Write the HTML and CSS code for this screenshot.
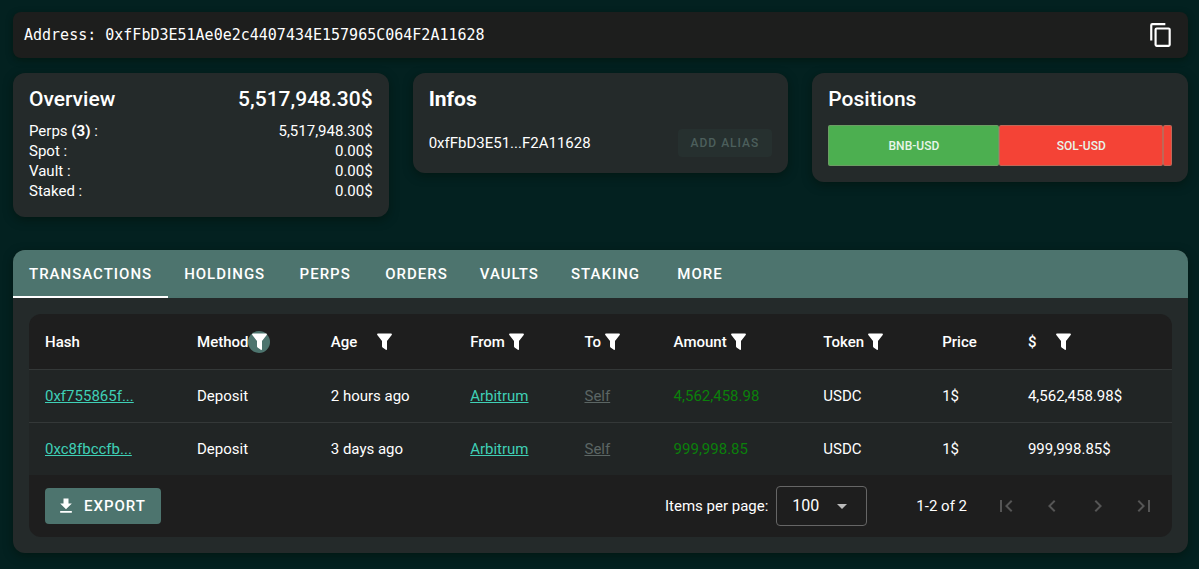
FILE: index.html
```html
<!DOCTYPE html>
<html lang="en">
<head>
    <meta charset="UTF-8">
    <meta name="viewport" content="width=device-width, initial-scale=1">
    <title>Address</title>
    <link rel="stylesheet" href="styles.css">
</head>
<body>
<svg class="defs" aria-hidden="true">
    <symbol id="filter" viewBox="0 0 15 17"><path d="M1 0.5h13c.9 0 1.2.8.7 1.5L10 8v8c0 .9-.6 1.1-1.2.7L5.6 14.400c-.4-.3-.6-.6-.6-1.100V8L.3 2C-.2 1.300.1.5 1 .5z"/></symbol>
</svg>

<header class="address">
    <span>Address: 0xfFbD3E51Ae0e2c4407434E157965C064F2A11628</span>
    <button class="icon-btn" aria-label="Copy address">
        <svg width="26" height="26" viewBox="0 0 24 24"><path d="M19 21H8V7h11m0-2H8a2 2 0 0 0-2 2v14a2 2 0 0 0 2 2h11a2 2 0 0 0 2-2V7a2 2 0 0 0-2-2m-3-4H4a2 2 0 0 0-2 2v14h2V3h12V1z"/></svg>
    </button>
</header>

<main>
    <div class="cards">
        <section class="card overview">
            <div class="line title"><h2>Overview</h2><span>5,517,948.30$</span></div>
            <div class="line"><span>Perps <b>(3)</b> :</span><span>5,517,948.30$</span></div>
            <div class="line"><span>Spot :</span><span>0.00$</span></div>
            <div class="line"><span>Vault :</span><span>0.00$</span></div>
            <div class="line"><span>Staked :</span><span>0.00$</span></div>
        </section>
        <section class="card infos">
            <h2>Infos</h2>
            <div class="line"><span>0xfFbD3E51...F2A11628</span><button class="alias" disabled>ADD ALIAS</button></div>
        </section>
        <section class="card positions">
            <h2>Positions</h2>
            <div class="bar">
                <div class="long" style="width: 49.8%">BNB-USD</div>
                <div class="short" style="width: 47.600%">SOL-USD</div>
                <div class="short" style="width: 2.600%"></div>
            </div>
        </section>
    </div>

    <section class="panel">
        <nav class="tabs">
            <button class="tab active">TRANSACTIONS</button>
            <button class="tab">HOLDINGS</button>
            <button class="tab">PERPS</button>
            <button class="tab">ORDERS</button>
            <button class="tab">VAULTS</button>
            <button class="tab">STAKING</button>
            <button class="tab">MORE</button>
        </nav>
        <div class="sheet">
            <table>
                <colgroup>
                    <col class="c-hash"><col class="c-method"><col class="c-age"><col class="c-from"><col class="c-to"><col class="c-amount"><col class="c-token"><col class="c-price"><col class="c-total">
                </colgroup>
                <thead>
                    <tr>
                        <th><div class="th">Hash</div></th>
                        <th><div class="th tight">Method<button class="filter on" aria-label="Filter method"><svg><use href="#filter"/></svg></button></div></th>
                        <th><div class="th wide">Age<button class="filter" aria-label="Filter age"><svg><use href="#filter"/></svg></button></div></th>
                        <th><div class="th">From<button class="filter" aria-label="Filter from"><svg><use href="#filter"/></svg></button></div></th>
                        <th><div class="th">To<button class="filter" aria-label="Filter to"><svg><use href="#filter"/></svg></button></div></th>
                        <th><div class="th">Amount<button class="filter" aria-label="Filter amount"><svg><use href="#filter"/></svg></button></div></th>
                        <th><div class="th">Token<button class="filter" aria-label="Filter token"><svg><use href="#filter"/></svg></button></div></th>
                        <th><div class="th">Price</div></th>
                        <th><div class="th wide">$<button class="filter" aria-label="Filter value"><svg><use href="#filter"/></svg></button></div></th>
                    </tr>
                </thead>
                <tbody>
                    <tr>
                        <td><a href="#">0xf755865f...</a></td>
                        <td>Deposit</td>
                        <td>2 hours ago</td>
                        <td><a href="#">Arbitrum</a></td>
                        <td><a href="#" class="self">Self</a></td>
                        <td class="in">4,562,458.98</td>
                        <td>USDC</td>
                        <td>1$</td>
                        <td>4,562,458.98$</td>
                    </tr>
                    <tr>
                        <td><a href="#">0xc8fbccfb...</a></td>
                        <td>Deposit</td>
                        <td>3 days ago</td>
                        <td><a href="#">Arbitrum</a></td>
                        <td><a href="#" class="self">Self</a></td>
                        <td class="in">999,998.85</td>
                        <td>USDC</td>
                        <td>1$</td>
                        <td>999,998.85$</td>
                    </tr>
                </tbody>
            </table>
            <footer class="footer">
                <button class="export">
                    <svg width="20" height="20" viewBox="0 0 24 24"><path d="M5 20h14v-2H5m14-9h-4V3H9v6H5l7 7z"/></svg>
                    EXPORT
                </button>
                <label for="per-page">Items per page:</label>
                <div class="select">
                    <select id="per-page"><option>100</option></select>
                    <svg width="24" height="24" viewBox="0 0 24 24"><path d="M7 10l5 5 5-5z"/></svg>
                </div>
                <span class="range">1-2 of 2</span>
                <div class="pager">
                    <button disabled aria-label="First page"><svg width="24" height="24" viewBox="0 0 24 24"><path d="M18.410 16.590L13.820 12l4.590-4.590L17 6l-6 6 6 6zM6 6h2v12H6z"/></svg></button>
                    <button disabled aria-label="Previous page"><svg width="24" height="24" viewBox="0 0 24 24"><path d="M15.410 16.580L10.830 12l4.580-4.590L14 6l-6 6 6 6z"/></svg></button>
                    <button disabled aria-label="Next page"><svg width="24" height="24" viewBox="0 0 24 24"><path d="M8.590 16.580L13.170 12 8.590 7.410 10 6l6 6-6 6z"/></svg></button>
                    <button disabled aria-label="Last page"><svg width="24" height="24" viewBox="0 0 24 24"><path d="M5.590 7.410L10.180 12l-4.590 4.590L7 18l6-6-6-6zM16 6h2v12h-2z"/></svg></button>
                </div>
            </footer>
        </div>
    </section>
</main>
</body>
</html>
```
FILE: styles.css
```css
* { box-sizing: border-box; }
body { margin: 0; padding: 12px 11px 16px 13px; background-color: #032120; color: #fff; font: 15px/20px Roboto, sans-serif; }
button, select { font: inherit; color: inherit; background: none; border: 0; padding: 0; }
h2 { margin: 0; font-size: 21px; line-height: 20px; font-weight: 500; }
svg { fill: currentColor; display: block; }
.defs { display: none; }

.address { display: flex; align-items: center; justify-content: space-between; height: 46px; padding: 0 14px 0 11px; border-radius: 8px; background: #1d1e1d; font-family: "DejaVu Sans Mono", monospace; box-shadow: 0 2px 6px rgba(0, 20, 10, .6); }

.cards { display: grid; grid-template-columns: repeat(3, 1fr); gap: 24px; align-items: start; margin: 15px 0 33px; }
.card { padding: 16px; border-radius: 12px; background: #242a2a; box-shadow: 0 3px 10px rgba(0, 16, 8, .5); }
.line { display: flex; align-items: center; justify-content: space-between; }
.title { margin-bottom: 12px; font-size: 21px; font-weight: 500; }
.infos h2 { margin-bottom: 20px; font-weight: 700; }
.alias { height: 28px; padding: 0 13px; border-radius: 4px; background: #26302f; color: #4c5f5c; font-size: 12px; font-weight: 500; letter-spacing: 1px; }
.positions h2 { margin-bottom: 16px; }
.bar { display: flex; height: 41px; font-size: 12px; font-weight: 500; }
.bar div { display: flex; align-items: center; justify-content: center; border-radius: 2px; border: 1px solid rgba(140, 140, 120, .5); color: #e8f5e9; }
.long { background: #4caf50; }
.short { background: #f44336; }

.panel { border-radius: 12px; background: #242a2a; overflow: hidden; box-shadow: 0 3px 10px rgba(0, 16, 8, .5); }
.tabs { display: flex; background: #4d746e; }
.tab { height: 48px; min-width: 88px; padding: 0 16px; font-size: 15px; font-weight: 500; letter-spacing: 1px; }
.active { box-shadow: inset 0 -2px #fff; }
.sheet { margin: 16px; border-radius: 12px; background: #1e1e1e; overflow: hidden; }

table { width: 100%; border-collapse: collapse; table-layout: fixed; }
.c-hash { width: 13.3%; }
.c-method { width: 11.7%; }
.c-age { width: 12.2%; }
.c-from { width: 10%; }
.c-to { width: 7.8%; }
.c-amount { width: 13.1%; }
.c-token { width: 10.4%; }
.c-price { width: 7.5%; }
.c-total { width: 14%; }
th { height: 55px; padding: 1px 0 0 16px; font-weight: 500; text-align: left; }
td { height: 53px; padding: 0 0 0 16px; border-top: 1px solid #343838; background: #212525; }
.th { display: flex; align-items: center; gap: 4px; }
.tight { gap: 0; }
.wide { gap: 20px; }
.filter svg { width: 15px; height: 17px; }
.on { display: flex; align-items: center; justify-content: center; width: 22px; height: 22px; border-radius: 50%; background: #4d746e; }
a { color: #3fd0b6; }
.self { color: #5c6664; }
.in { color: #0b800b; }

.footer { display: flex; align-items: center; height: 62px; padding: 0 16px; }
.export { display: flex; align-items: center; gap: 8px; height: 36px; margin-right: auto; padding: 0 15px 0 11px; border-radius: 4px; background: #4d746e; font-weight: 500; letter-spacing: 1px; }
.select { display: grid; align-items: center; margin: 0 49px 0 8px; }
.select > * { grid-area: 1 / 1; }
.select select { width: 91px; height: 40px; padding-left: 15px; border: 1px solid #666; border-radius: 4px; appearance: none; font-size: 16px; }
.select svg { justify-self: end; margin-right: 13px; fill: #bbb; pointer-events: none; }
.pager { display: flex; gap: 22px; margin-left: 27px; color: #555; }
```
